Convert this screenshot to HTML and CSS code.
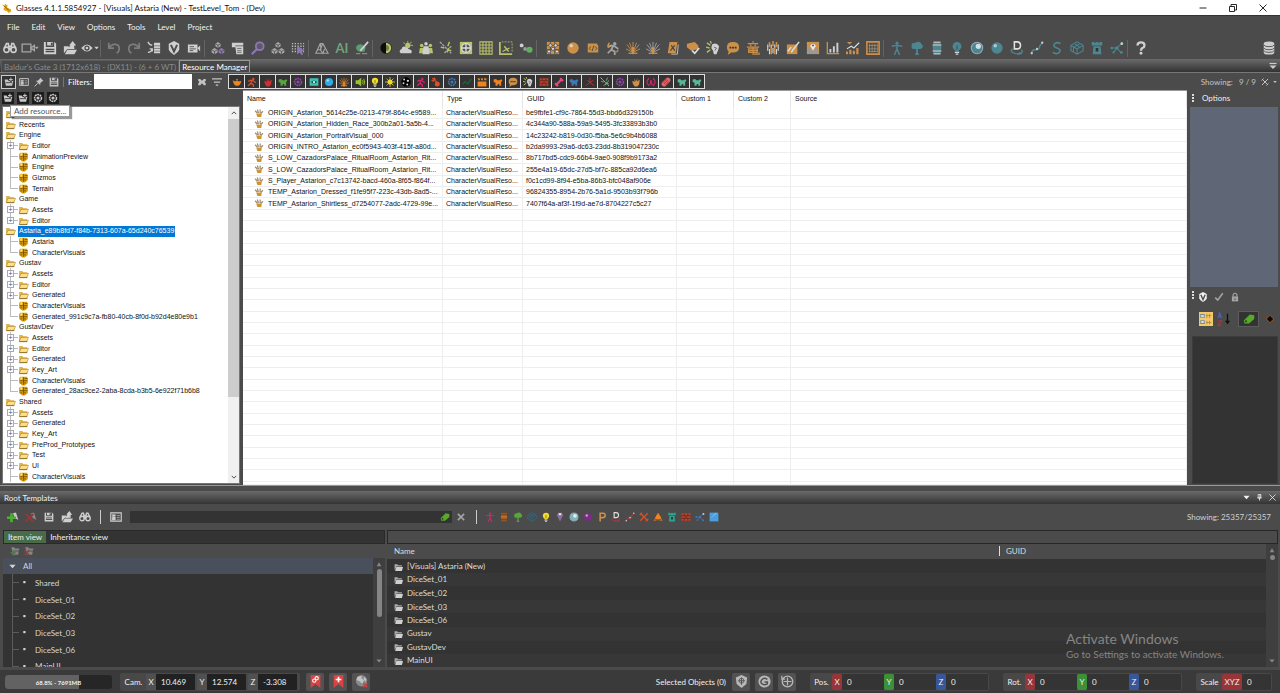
FILE: index.html
```html
<!DOCTYPE html>
<html lang="en">
<head>
  <meta charset="UTF-8">
  <meta name="viewport" content="width=device-width, initial-scale=1.0">
  <title>Glasses 4.1.1.5854927</title>
  <link rel="stylesheet" href="styles.css">
</head>
<body>
  <!-- icon sprite -->
  <svg class="sprite" aria-hidden="true">
    <symbol id="logo" viewBox="0 0 16 16"><path d="M0 2l4 2 1-3 4 3-1 3 6 3 1 3-4 3-3-3-4-1-2-3 2-2z" fill="#e2a712"/><path d="M4 5l7 7" stroke="#7a5200" stroke-width="1.500"/></symbol>
    <symbol id="binoc" viewBox="0 0 16 16"><g fill="none" stroke="currentColor" stroke-width="1.800"><circle cx="4" cy="10" r="3"/><circle cx="12" cy="10" r="3"/><path d="M1.500 8L4 3h2l1 6h2l1-6h2l2.500 5M6 6h4"/></g></symbol>
    <symbol id="camera" viewBox="0 0 20 16"><path d="M1 3.500h10v9H1zM11 8l4-3v6z" fill="none" stroke="currentColor" stroke-width="1.500"/><path d="M15.500 6.500H20l-2.200 3z" fill="currentColor"/></symbol>
    <symbol id="save" viewBox="0 0 16 16"><path d="M1 1h12l2 2v12H1z" fill="currentColor"/><path d="M4 1v5h8V1M3 9.500h10M3 12h10" fill="none" stroke="#4b4b4b" stroke-width="1.500"/><path d="M9 2h2v3H9z" fill="#4b4b4b"/></symbol>
    <symbol id="open" viewBox="0 0 16 16"><path d="M1 14V6h5l1 1h6v2H5zM2 15l3-5h11l-3 5z" fill="currentColor"/><path d="M7 9c0-3 1-4 2-4H7l4-5 4 5h-2c0 3-2 4-6 4z" fill="currentColor"/></symbol>
    <symbol id="eye" viewBox="0 0 20 16"><path d="M0 8q6.500-8 13 0-6.500 8-13 0z" fill="currentColor"/><circle cx="6.500" cy="8" r="3" fill="#4b4b4b"/><circle cx="6.500" cy="8" r="1.500" fill="currentColor"/><path d="M15 6.500h5l-2.500 3z" fill="currentColor"/></symbol>
    <symbol id="undo" viewBox="0 0 16 16"><path d="M2 2v6h6M2.500 7.500C6 2 14 3 14 9q0 3-3 5" fill="none" stroke="currentColor" stroke-width="2"/></symbol>
    <symbol id="redo" viewBox="0 0 16 16"><path d="M14 2v6H8M13.500 7.500C10 2 2 3 2 9q0 3 3 5" fill="none" stroke="currentColor" stroke-width="2"/></symbol>
    <symbol id="flow" viewBox="0 0 16 16"><path d="M1 1l2 3 3 1M1 13q4 0 5-4M3 9h3v3" fill="none" stroke="currentColor" stroke-width="1.600"/><path d="M8 2h7v12H8z" fill="currentColor"/><path d="M8 5.500h7M8 8.500h7M8 11.500h7" stroke="#777"/></symbol>
    <symbol id="vshield" viewBox="0 0 16 16"><path d="M8 0l6 3v7q-1 3-6 6-5-3-6-6V3z" fill="currentColor"/><path d="M4.500 4.500L8 12l3.500-7.500" fill="none" stroke="#4b4b4b" stroke-width="2.200"/></symbol>
    <symbol id="camcorder" viewBox="0 0 16 16"><path d="M1 4h11v9H1zM12 8l3-3v7z" fill="currentColor"/><path d="M3 6.500h5M3 9h7M3 11h4" stroke="#4b4b4b"/></symbol>
    <symbol id="cubes" viewBox="0 0 16 16"><path d="M8 1l3 2v3L8 8 5 6V3zM4 8l3.500 2v3L4 15 .7 13v-3z" fill="currentColor"/><path d="M12 8l3.300 2v3L12 15l-3.300-2v-3z" fill="var(--hi, currentColor)"/><path d="M5 3l3 2 3-2M8 5v3M1 10l3 2 3-2M4 12v3M9 10l3 2 3-2M12 12v3" fill="none" stroke="#444" stroke-width=".8"/></symbol>
    <symbol id="scroll" viewBox="0 0 16 16"><path d="M1 2h13v3H5v2H1zM5 6h9v9H6z" fill="currentColor"/><path d="M7 8.500h5M7 11h5M7 13h5" stroke="#666"/></symbol>
    <symbol id="search" viewBox="0 0 16 16"><circle cx="10" cy="6" r="4.500" fill="#5d5967" stroke="currentColor" stroke-width="2"/><path d="M7 9l-6 6" stroke="currentColor" stroke-width="2.500"/></symbol>
    <symbol id="dots" viewBox="0 0 16 16"><path d="M1 3h14M1 6h14M1 9h14M1 12h14" stroke="#bdbdbd" stroke-width="1.500" stroke-dasharray="1.500 1.700"/><path d="M7 5l8 6-3 1 2 3-2 1-2-3-3 2z" fill="#8d78b5"/></symbol>
    <symbol id="peak" viewBox="0 0 16 16"><path d="M1 14L6 3h3l6 11zM6 3l1 7M9 3L6 10l3 4 2-5M3 10h3" fill="none" stroke="currentColor" stroke-width="1.300"/></symbol>
    <symbol id="brush" viewBox="0 0 16 16"><path d="M1 8q1-5 7-4l4 3-1 5q-8 2-10-4z" fill="#5d9b73"/><path d="M15 1L8 9l-2 2" stroke="#d0d0d0" stroke-width="2" fill="none"/><path d="M1 14.500h5M8 14.500h6" stroke="#888" stroke-width="1.500"/></symbol>
    <symbol id="half" viewBox="0 0 16 16"><circle cx="8" cy="8" r="7.500" fill="#0c0c0c"/><path d="M8 1a7 7 0 010 14z" fill="#b9c26c"/><path d="M8 4a4 4 0 010 8z" fill="#0c0c0c" opacity=".4"/></symbol>
    <symbol id="cloud" viewBox="0 0 16 16"><circle cx="10" cy="5" r="3" fill="#b9c26c"/><path d="M10 0v2M5 2l2 1M14 1l-1 2M13 5h3" stroke="#b9c26c"/><path d="M2 14q-3-3 1-5 1-4 5-2 2 0 3 2 5 1 3 5z" fill="#cfcfcf"/></symbol>
    <symbol id="people" viewBox="0 0 16 16"><circle cx="8" cy="3" r="2" fill="currentColor"/><circle cx="3" cy="5" r="2" fill="var(--hi)"/><circle cx="13" cy="5" r="2" fill="var(--hi)"/><path d="M0 14l1-6h4v6zM11 14V8h4l1 6z" fill="var(--hi)"/><path d="M4 15l1-9h6l1 9z" fill="currentColor"/></symbol>
    <symbol id="wand" viewBox="0 0 16 16"><path d="M1 1l13 13M14 6l-8 8" stroke="currentColor" stroke-width="1.500" stroke-dasharray="3 1"/><path d="M12 1l-2 5M2 7l4 1M9 13l2-5M14 11l-4-1" stroke="var(--hi, #6cae7a)" stroke-width="1.600"/></symbol>
    <symbol id="compass" viewBox="0 0 16 16"><path d="M1 1h14v14H1z" fill="#b9c26c"/><circle cx="8" cy="8" r="5" fill="#555" stroke="#ddd" stroke-width="1.500"/><path d="M8 3v10M3 8h10" stroke="#ddd" stroke-width="1.500"/></symbol>
    <symbol id="grid" viewBox="0 0 16 16"><path d="M1 1h14v14H1zM4.500 1v14M8 1v14M11.500 1v14M1 4.500h14M1 8h14M1 11.500h14" fill="none" stroke="currentColor" stroke-width="1.200"/></symbol>
    <symbol id="ruler" viewBox="0 0 16 16"><path d="M1 1v14h14" fill="none" stroke="currentColor" stroke-width="2"/><path d="M3 1h12v12" fill="none" stroke="currentColor" stroke-dasharray="2 1.500"/><path d="M4 12l8-4M6 6l5 6" stroke="currentColor" stroke-width="1.500"/></symbol>
    <symbol id="atoms" viewBox="0 0 16 16"><circle cx="3" cy="5" r="2.200" fill="#d0d0d0"/><circle cx="7" cy="9" r="2.200" fill="#9a9a9a"/><circle cx="12" cy="10" r="3.500" fill="#5db15d"/></symbol>
    <symbol id="board" viewBox="0 0 16 16"><path d="M1 1h14v14H1z" fill="currentColor"/><path d="M1 5h14M1 10h14M5 1v14M10 1v14" stroke="#4b4b4b"/><g fill="#ddd" stroke="#444" stroke-width=".8"><circle cx="5" cy="5" r="1.800"/><circle cx="11" cy="5" r="1.800"/><circle cx="8" cy="9" r="1.800"/><circle cx="3.500" cy="12" r="1.800"/><circle cx="12.500" cy="12" r="1.800"/></g></symbol>
    <symbol id="ball" viewBox="0 0 16 16"><circle cx="8" cy="8" r="6.500" fill="currentColor"/><circle cx="6" cy="5.500" r="2" fill="#fff" opacity=".55"/></symbol>
    <symbol id="code" viewBox="0 0 16 16"><path d="M1 2h12l2 3v9H1z" fill="currentColor"/><path d="M5 6L3 8.500 5 11M11 6l2 2.500-2 2.500M9 5l-2 7" fill="none" stroke="#4b4b4b" stroke-width="1.300"/></symbol>
    <symbol id="runner" viewBox="0 0 16 16"><circle cx="10" cy="3" r="2" fill="currentColor"/><path d="M2 7l4-2 4 1 4 3M8 6l-2 4 4 2v4M6 10l-4 4" fill="none" stroke="currentColor" stroke-width="2"/><path d="M4 2q-3 3-1 6M12 13l2-3" fill="none" stroke="var(--hi, none)" stroke-width="1.500"/></symbol>
    <symbol id="burst" viewBox="0 0 16 16"><path d="M8 1v13M1 4l7 9 7-9M0 9l8 4 8-4M4 2l4 11 4-11" fill="none" stroke="currentColor"/><path d="M3 14h10" stroke="var(--hi, currentColor)" stroke-width="1.500"/><path d="M8 7v8" stroke="var(--hi, currentColor)" stroke-width="2.500"/></symbol>
    <symbol id="card" viewBox="0 0 16 16"><path d="M4 1h9l-2 13H2z" fill="currentColor"/><path d="M14 4l-1 11H6" fill="none" stroke="#ccc"/><path d="M6 5l4 6M10 5l-5 6" stroke="#444" stroke-width="1.300"/></symbol>
    <symbol id="tagcheck" viewBox="0 0 16 16"><path d="M1 3l9-2 4 4v4l-8 2-5-4z" fill="currentColor"/><path d="M7 11l3 3 5-6" fill="none" stroke="#ddd" stroke-width="2"/></symbol>
    <symbol id="shout" viewBox="0 0 16 16"><path d="M7 4q5-3 8 2l-1 4-2 5H9l-1-4-2-3z" fill="#d0d0d0"/><path d="M1 2l4 3M0 7l4 1M1 13l4-3M5 0l1 3" stroke="#b9c26c" stroke-width="1.500"/><path d="M9 7l3 1-2 3" fill="none" stroke="#666"/></symbol>
    <symbol id="chat" viewBox="0 0 16 16"><path d="M1 7q0-6 7-6t7 6-7 6H6l-4 3 1-4q-2-2-2-5z" fill="currentColor"/><path d="M4 6.500h2v2H4zM7 6.500h2v2H7zM10 6.500h2v2h-2z" fill="#333"/></symbol>
    <symbol id="ideogram" viewBox="0 0 16 16"><path d="M8 0v2M2 3h12M5 4l1 2M11 4l-1 2M1 7h14M3 9h10v4H3zM3 11h10M8 7v8h7v-2" fill="none" stroke="currentColor" stroke-width="1.300"/></symbol>
    <symbol id="crowd" viewBox="0 0 16 16"><path d="M4 1v6M8 0v6M12 1v6M6 8v7M10 8v7" stroke="#cc9049" stroke-width="1.800"/><path d="M2 4v7M6 4v4M10 4v4M14 4v7M4 9v6M8 8v6M12 9v6" stroke="#d5d5d5" stroke-width="1.300"/></symbol>
    <symbol id="paint" viewBox="0 0 16 16"><path d="M1 4h12v11H1z" fill="currentColor"/><path d="M15 1L8 10l-2 3M2 12l4-5" stroke="#ddd" stroke-width="1.700" fill="none"/></symbol>
    <symbol id="map" viewBox="0 0 16 16"><path d="M1 1h14v14H1z" fill="currentColor"/><path d="M2 8l5 2 7-2v6H2z" fill="#999"/><path d="M8 11L5 6a3 3 0 116 0z" fill="#e8e8e8"/><circle cx="8" cy="5" r="1" fill="#444"/></symbol>
    <symbol id="bars" viewBox="0 0 16 16"><path d="M1.500 1v13.500H15" fill="none" stroke="#cc9049" stroke-width="1.500"/><path d="M5 9v4M9 6v7M13 2v11" stroke="#cfcfcf" stroke-width="2.200"/></symbol>
    <symbol id="trend" viewBox="0 0 16 16"><path d="M1 12v3M5 10v5M9 11v4M13 8v7" stroke="#cc9049" stroke-width="2.500"/><path d="M1 9l5-3 3 2 6-6" fill="none" stroke="#ddd" stroke-width="1.300"/><path d="M1 1h6L4 4z" fill="#cc9049"/></symbol>
    <symbol id="abacus" viewBox="0 0 16 16"><path d="M1 1h14v14H1z" fill="#55493a" stroke="currentColor" stroke-width="1.800"/><path d="M4 3v10M7 3v10M10 3v10M13 3v10M3 5h10M3 9h10M3 12h10" stroke="#999" stroke-width=".8"/></symbol>
    <symbol id="person" viewBox="0 0 16 16"><circle cx="8" cy="2.500" r="1.800" fill="currentColor"/><path d="M2 6l6-1 6 1M8 4v5l-3 7M8 9l3 7" fill="none" stroke="currentColor" stroke-width="1.700"/></symbol>
    <symbol id="tree" viewBox="0 0 16 16"><path d="M2 6q-1-4 4-4 5-3 7 1 4 4-1 6H4Q1 9 2 6z" fill="currentColor"/><path d="M8 7v8M6 15h4" stroke="currentColor" stroke-width="2"/></symbol>
    <symbol id="barrel" viewBox="0 0 16 16"><path d="M4 1h8l1 6-1 8H4L3 7z" fill="currentColor"/><path d="M3 4.500h10M3 11.500h10M4 1.500h8M4 14.500h8" stroke="var(--hi, #6b3c18)" stroke-width="1.600"/></symbol>
    <symbol id="bulb" viewBox="0 0 16 16"><circle cx="8" cy="6" r="5" fill="currentColor"/><path d="M6 9h4v3H6z" fill="currentColor"/><path d="M5.500 13h5M6.500 15h3" stroke="#d5d5d5" stroke-width="1.500"/><path d="M8 5v5" stroke="#444"/></symbol>
    <symbol id="sphere" viewBox="0 0 16 16"><circle cx="8" cy="8" r="6.500" fill="currentColor" stroke="#9ab" stroke-width="1.200"/><circle cx="9.500" cy="6" r="3" fill="#fff" opacity=".75"/></symbol>
    <symbol id="decal" viewBox="0 0 16 16"><path d="M5 1h3q4 0 4 4t-4 4H5z" fill="none" stroke="#e0e0e0" stroke-width="1.800"/><path d="M3 9q-4 3 2 5t8 0 0-4M9 15l3-2" fill="none" stroke="currentColor" stroke-width="1.500"/></symbol>
    <symbol id="spline" viewBox="0 0 16 16"><path d="M2 14q0-4 4-4 5 1 5-4l3-4" fill="none" stroke="currentColor" stroke-width="1.600"/><circle cx="14" cy="2" r="1.300" fill="#ccc"/><circle cx="8" cy="9" r="1.300" fill="#ccc"/><circle cx="2" cy="14" r="1.300" fill="#ccc"/></symbol>
    <symbol id="scurve" viewBox="0 0 16 16"><path d="M12 3Q9 1 6 2.500 2 6 8 8q6 2 2 5.500-3 2-7-.5" fill="none" stroke="currentColor" stroke-width="1.800"/></symbol>
    <symbol id="cube" viewBox="0 0 16 16"><path d="M1 5l7-4 7 4v6l-7 4-7-4zM1 5l7 4 7-4M8 9v6M4 7v5M5 3l6 4M11 3L5 7" fill="none" stroke="currentColor" stroke-width="1.200"/></symbol>
    <symbol id="tower" viewBox="0 0 16 16"><path d="M2 1h3v1h2V1h2v1h2V1h3v4H2zM4 6h8l1 9H3z" fill="currentColor"/><path d="M6.500 8h3v4h-3z" fill="#333"/></symbol>
    <symbol id="nodes" viewBox="0 0 16 16"><path d="M2 8h6l6-6M8 8l5 6M8 8l-4 5" fill="none" stroke="currentColor" stroke-width="1.200"/><g fill="currentColor"><circle cx="2" cy="8" r="1.500"/><circle cx="8" cy="8" r="2"/><circle cx="13" cy="13" r="1.600"/><circle cx="4" cy="13" r="1.300"/></g><circle cx="13.500" cy="3" r="1.600" fill="#ccc"/></symbol>
    <symbol id="help" viewBox="0 0 16 16"><path d="M4 5q0-3.500 4-3.500T12 5q0 2-2.500 3Q8 9 8 11" fill="none" stroke="currentColor" stroke-width="2.600"/><circle cx="8" cy="14" r="1.700" fill="currentColor"/></symbol>
    <symbol id="db" viewBox="0 0 16 16"><path d="M2 3v10q0 2.500 6 2.500t6-2.500V3" fill="currentColor"/><ellipse cx="8" cy="3" rx="6" ry="2.500" fill="currentColor"/><path d="M2 4.500q1 2 6 2t6-2M2 8q1 2 6 2t6-2M2 11q1 2 6 2t6-2" fill="none" stroke="#4b4b4b"/></symbol>
    <symbol id="addres" viewBox="0 0 16 16"><path d="M1 4h5l1 2h8l-2 8H3z" fill="currentColor"/><path d="M3 9h10" stroke="#333" stroke-width="1.300"/><path d="M11 1v7M8 4h7" stroke="#333" stroke-width="3"/><path d="M11 1v6M8 4h6" stroke="currentColor" stroke-width="1.500"/></symbol>
    <symbol id="addfolder" viewBox="0 0 16 16"><path d="M2 2h5l1 2h7l-2 10H5z" fill="currentColor"/><path d="M6 8h9" stroke="#4b4b4b" stroke-width="1.300"/><path d="M5 7v8M1 11h8" stroke="#4c7b48" stroke-width="2.500"/></symbol>
    <symbol id="delfolder" viewBox="0 0 16 16"><path d="M2 2h5l1 2h7l-2 10H5z" fill="currentColor"/><path d="M6 8h9" stroke="#4b4b4b" stroke-width="1.300"/><path d="M1 7l7 7M8 7l-7 7" stroke="#8e4044" stroke-width="2.500"/></symbol>
    <symbol id="panel" viewBox="0 0 16 16"><path d="M1 2.500h14v11H1z" fill="none" stroke="currentColor" stroke-width="1.500"/><path d="M3 5h4v2H3zM3 8h4v4H3zM9 6h4M9 8.500h4M9 11h4" fill="currentColor" stroke="currentColor" stroke-width=".8"/></symbol>
    <symbol id="pin" viewBox="0 0 16 16"><path d="M10 1l5 5-2 1-3 3v3L3 6h3l3-3z" fill="currentColor"/><path d="M6 10l-5 5" stroke="currentColor" stroke-width="1.600"/></symbol>
    <symbol id="cross" viewBox="0 0 16 16"><path d="M3 3l10 10M13 3L3 13" stroke="currentColor" stroke-width="2.600"/></symbol>
    <symbol id="clear" viewBox="0 0 16 16"><path d="M2 3h3l3 3 3-3h3v3l-2 2 2 2v3h-3l-3-3-3 3H2v-3l2-2-2-2z" fill="currentColor"/></symbol>
    <symbol id="filter" viewBox="0 0 16 16"><path d="M0 3h16M3 8h10M6 13h4" stroke="currentColor" stroke-width="2"/></symbol>
    <symbol id="teapot" viewBox="0 0 16 16"><path d="M1 5l4 2q3-3 6 0l4-1-2 6-3 2H6l-3-3z" fill="currentColor"/><circle cx="8" cy="4" r="1.300" fill="currentColor"/></symbol>
    <symbol id="gear" viewBox="0 0 16 16"><circle cx="8" cy="8" r="5.500" fill="none" stroke="currentColor" stroke-width="2.500" stroke-dasharray="3 1"/><circle cx="8" cy="8" r="2.500" fill="currentColor"/></symbol>
    <symbol id="hand" viewBox="0 0 16 16"><path d="M2 6l4 2-1-6 3 5 2-6v6l4-3-1 8-3 3H6L3 11z" fill="currentColor"/></symbol>
    <symbol id="reel" viewBox="0 0 16 16"><path d="M1 2h14v12H1z" fill="currentColor"/><path d="M3 8q5-5 10 0-5 5-10 0z" fill="#164d49"/><circle cx="8" cy="8" r="1.800" fill="#c9fff8"/></symbol>
    <symbol id="speaker" viewBox="0 0 16 16"><path d="M1 5h4l5-4v14l-5-4H1z" fill="currentColor"/><path d="M12 5q2 3 0 6M14 3q3 5 0 10" stroke="currentColor" stroke-width="1.500" fill="none"/></symbol>
    <symbol id="sun" viewBox="0 0 16 16"><circle cx="8" cy="8" r="4" fill="currentColor"/><path d="M8 0v16M0 8h16M2.500 2.500l11 11M13.500 2.500l-11 11" stroke="currentColor" stroke-width="1.200"/></symbol>
    <symbol id="moon" viewBox="0 0 16 16"><circle cx="8" cy="8" r="7.500" fill="#000"/><g fill="#ddd"><circle cx="5" cy="4" r="1.500"/><circle cx="11" cy="6" r="1.800"/><circle cx="4" cy="10" r="1.500"/><circle cx="10" cy="12" r="1.500"/></g></symbol>
    <symbol id="spray" viewBox="0 0 16 16"><circle cx="10" cy="11" r="4" fill="currentColor"/><path d="M2 2l3 2 4 4M1 5l4 2M5 1l2 4" stroke="currentColor" stroke-width="2"/></symbol>
    <symbol id="path" viewBox="0 0 16 16"><path d="M1 12l4-5 4 4 6-8" fill="none" stroke="currentColor" stroke-width="1.800"/></symbol>
    <symbol id="clap" viewBox="0 0 16 16"><path d="M1 7h14v8H1zM1 2h3l1 3H2zM6 2h3l1 3H7zM11 2h4v3h-3z" fill="currentColor"/></symbol>
    <symbol id="brick" viewBox="0 0 16 16"><path d="M1 2h14v12H1z" fill="currentColor"/><path d="M1 6h14M1 10h14M5 2v4M11 2v4M8 6v4M5 10v4M11 10v4" stroke="#402020"/></symbol>
    <symbol id="bone" viewBox="0 0 16 16"><path d="M4 12l8-8" stroke="currentColor" stroke-width="3.500"/><g fill="currentColor"><circle cx="3" cy="11" r="2"/><circle cx="5" cy="13" r="2"/><circle cx="11" cy="3" r="2"/><circle cx="13" cy="5" r="2"/></g></symbol>
    <symbol id="axis" viewBox="0 0 16 16"><path d="M8 1v8L1 14M8 9l7 5M3 5l5 4 5-4" fill="none" stroke="currentColor" stroke-width="1.300"/></symbol>
    <symbol id="broadcast" viewBox="0 0 16 16"><path d="M5 2q-7 6 0 12M11 2q7 6 0 12M6 13l2-8 2 8" fill="none" stroke="currentColor" stroke-width="1.800"/></symbol>
    <symbol id="pill" viewBox="0 0 16 16"><path d="M5 11l6-6" stroke="currentColor" stroke-width="8" stroke-linecap="round"/><path d="M3 9l6-6M7 13l6-6M5 11l6-6" stroke="#7d2226"/></symbol>
    <symbol id="beast" viewBox="0 0 16 16"><path d="M1 4l4-1 2 2h4l2-2 2 3-2 2v6h-3v-3H8l-1 3H4V9L1 8z" fill="currentColor"/></symbol>
    <symbol id="tools" viewBox="0 0 16 16"><path d="M2 2l12 12M14 2L2 14M1 5l4-4M11 15l4-4" stroke="currentColor" stroke-width="2"/></symbol>
    <symbol id="folder" viewBox="0 0 16 16"><path d="M1 3h5l2 2h6v9H1z" fill="#dfb54c"/><path d="M1 14L4 7h12l-3 7z" fill="#ffe089" stroke="#9b741a" stroke-width=".8"/><path d="M2 13.500h12" stroke="#68501c"/></symbol>
    <symbol id="pack" viewBox="0 0 16 16"><path d="M3 1h10l2 2v8l-5 4H6l-5-4V3z" fill="#d99e08"/><path d="M8 2v12M2 7.500h12M10 4h4M3 11h3M9 11h3" stroke="#684700" stroke-width="1.200"/><path d="M3 2h3v4H3z" fill="#ffe56c"/></symbol>
    <symbol id="paw" viewBox="0 0 16 16"><path d="M3 8h10l-1 6H5z" fill="#cf9330"/><path d="M1 3l4 4M5 1l2 6M10 1v6M15 4l-4 4" stroke="#a08d72" stroke-width="2.200"/></symbol>
    <symbol id="dfolder" viewBox="0 0 16 16"><path d="M1 2h5l1 2h7v2H4l-2 6H1z" fill="#aaa"/><path d="M4 7h12l-2 7H2z" fill="#cfcfcf"/></symbol>
    <symbol id="check" viewBox="0 0 16 16"><path d="M2 9l4 4 8-11" fill="none" stroke="currentColor" stroke-width="2.500"/></symbol>
    <symbol id="lock" viewBox="0 0 16 16"><path d="M3 7h10v8H3z" fill="currentColor"/><path d="M5 7V4q3-4 6 0v3" fill="none" stroke="currentColor" stroke-width="1.800"/><path d="M8 10v3" stroke="#444" stroke-width="1.500"/></symbol>
    <symbol id="props" viewBox="0 0 16 16"><path d="M0 0h16v16H0z" fill="#f4c968"/><path d="M2 3h4v3H2zM2 10h4v3H2z" fill="#fff" stroke="#7088a0" stroke-width="1.200"/><path d="M9 2v5M12 2v5M9 10v4M12 10v4M8 4h6M8 12h6" stroke="#b48c35"/></symbol>
    <symbol id="sort" viewBox="0 0 16 16"><path d="M1 7l2-6 2 6M2 5h3" fill="none" stroke="#4a68b0" stroke-width="1.300"/><path d="M1 10h4l-4 5h4" fill="none" stroke="#a23b3b" stroke-width="1.300"/><path d="M12 2v9" stroke="#111" stroke-width="1.500"/><path d="M9 10h6l-3 4z" fill="#111"/></symbol>
    <symbol id="tag" viewBox="0 0 16 16"><path d="M9 2l6 1v5l-7 6H2l-1-4z" fill="#57a82b"/><circle cx="4" cy="11" r="1.400" fill="#26470f"/></symbol>
    <symbol id="diamond" viewBox="0 0 16 16"><path d="M8 2l6 6-6 6-6-6z" fill="#0b0b0b" stroke="#a8551a" stroke-width="1.600"/></symbol>
    <symbol id="plus" viewBox="0 0 16 16"><path d="M8 3l4-1 3 10-5-3z" fill="#c8c8c8"/><path d="M6 3v12M0 9h12" stroke="#4caf2f" stroke-width="3.500"/></symbol>
    <symbol id="minus" viewBox="0 0 16 16"><path d="M8 3l4-1 3 10-5-3z" fill="#888"/><path d="M1 4l10 10M11 4L1 14" stroke="#963638" stroke-width="3"/></symbol>
    <symbol id="park" viewBox="0 0 16 16"><path d="M5 15V2h5q3 0 3 3.500T9 9H5" fill="none" stroke="currentColor" stroke-width="2.500"/></symbol>
    <symbol id="gem" viewBox="0 0 16 16"><path d="M5 1h6l2 4-5 10L3 5z" fill="#8c6a99"/><path d="M6 2h4v3H6z" fill="#eee"/></symbol>
    <symbol id="fire" viewBox="0 0 16 16"><path d="M8 1l4 6 3 7H1l3-6z" fill="currentColor"/><path d="M2 15l12-4M14 15L2 11" stroke="#4b4b4b" stroke-width="1.300"/></symbol>
    <symbol id="square" viewBox="0 0 16 16"><path d="M1 1h14v14H1z" fill="#4b9fe0"/><path d="M2 10L10 2h3z" fill="#7fc4f5"/></symbol>
    <symbol id="mark" viewBox="0 0 16 16"><path d="M2 0h12v16l-6-5-6 5z" fill="#db4343"/><g fill="none" stroke="#fff" stroke-width="1.300"><circle cx="6.500" cy="7" r="2"/><circle cx="9.500" cy="4" r="2"/></g></symbol>
    <symbol id="markplus" viewBox="0 0 16 16"><path d="M2 0h12v16l-6-5-6 5z" fill="#db4343"/><path d="M8 2v7M4.500 5.500h7" stroke="#fff" stroke-width="2"/></symbol>
    <symbol id="globe" viewBox="0 0 16 16"><circle cx="8" cy="7" r="7" fill="#8a8a8a"/><path d="M3 2l5-1v3l3 2-2 5-3-3-4-2zM11 2l3 3-1 3-2-2z" fill="#c2c2c2"/><path d="M10 10l5 5M15 10l-5 5" stroke="#c84444" stroke-width="2"/></symbol>
    <symbol id="gshield" viewBox="0 0 16 16"><path d="M8 0l7 3-1 8-6 5-6-5-1-8z" fill="currentColor"/><path d="M8 3v9M4 7h8" stroke="#555" stroke-width="1.300"/><circle cx="8" cy="7" r="3" fill="none" stroke="#555"/></symbol>
    <symbol id="gring" viewBox="0 0 16 16"><circle cx="8" cy="8" r="7.500" fill="currentColor"/><path d="M11.500 5.500Q8 2.500 5 5.500t0 5.500q3 2 6.500 0V8.500H8" fill="none" stroke="#505050" stroke-width="1.800"/></symbol>
    <symbol id="target" viewBox="0 0 16 16"><circle cx="8" cy="8" r="6.500" fill="none" stroke="currentColor" stroke-width="1.600"/><path d="M8 3v10M3 8h10M1 1v4h4" fill="none" stroke="currentColor" stroke-width="1.500"/></symbol>
    <symbol id="up" viewBox="0 0 16 16"><path d="M2 14L8 3l6 11z" fill="currentColor"/></symbol>
    <symbol id="down" viewBox="0 0 16 16"><path d="M1 4h14l-7 8z" fill="currentColor"/></symbol>
    <symbol id="chevup" viewBox="0 0 16 16"><path d="M2 11l6-6 6 6" fill="none" stroke="currentColor" stroke-width="2.500"/></symbol>
    <symbol id="chevdown" viewBox="0 0 16 16"><path d="M2 5l6 6 6-6" fill="none" stroke="currentColor" stroke-width="2.500"/></symbol>
    <symbol id="win-min" viewBox="0 0 16 16"><path d="M1 8h14" stroke="currentColor" stroke-width="1.800"/></symbol>
    <symbol id="win-max" viewBox="0 0 16 16"><path d="M1 5h10v10H1zM4 5V1h11v11h-4" fill="none" stroke="currentColor" stroke-width="1.800"/></symbol>
    <symbol id="win-close" viewBox="0 0 16 16"><path d="M1 1l14 14M15 1L1 15" stroke="currentColor" stroke-width="1.800"/></symbol>
    <symbol id="dockpin" viewBox="0 0 16 16"><path d="M5 1h6v8H5zM3 9h10M8 9v6M9 1v8" fill="none" stroke="currentColor" stroke-width="1.800"/></symbol>
    <symbol id="overflow" viewBox="0 0 16 16"><path d="M1 3h14" stroke="currentColor" stroke-width="2.500"/><path d="M1 7h14l-7 7z" fill="currentColor"/></symbol>
  </svg>

  <header class="titlebar">
    <svg class="ic"><use href="#logo"/></svg>
    <h1>Glasses 4.1.1.5854927 - [Visuals] Astaria (New) - TestLevel_Tom - (Dev)</h1>
    <div class="window-buttons">
      <button aria-label="Minimize"><svg><use href="#win-min"/></svg></button>
      <button aria-label="Restore"><svg><use href="#win-max"/></svg></button>
      <button aria-label="Close"><svg><use href="#win-close"/></svg></button>
    </div>
  </header>

  <nav class="menubar">
    <button>File</button><button>Edit</button><button>View</button><button>Options</button><button>Tools</button><button>Level</button><button>Project</button>
  </nav>

  <div class="toolbar main-toolbar">
    <button aria-label="Find"><svg class="ic"><use href="#binoc"/></svg></button>
    <button aria-label="Camera" class="dim"><svg class="ic-wide"><use href="#camera"/></svg></button>
    <button aria-label="Save"><svg class="ic"><use href="#save"/></svg></button>
    <button aria-label="Open"><svg class="ic"><use href="#open"/></svg></button>
    <button aria-label="Visibility"><svg class="ic-wide"><use href="#eye"/></svg></button>
    <span class="sep"></span>
    <button aria-label="Undo" class="off"><svg class="ic"><use href="#undo"/></svg></button>
    <button aria-label="Redo" class="off"><svg class="ic"><use href="#redo"/></svg></button>
    <button aria-label="Hierarchy"><svg class="ic"><use href="#flow"/></svg></button>
    <button aria-label="Validate"><svg class="ic"><use href="#vshield"/></svg></button>
    <button aria-label="Recorder"><svg class="ic"><use href="#camcorder"/></svg></button>
    <span class="sep"></span>
    <button aria-label="Templates" class="dim hi-purple"><svg class="ic"><use href="#cubes"/></svg></button>
    <button aria-label="Journal"><svg class="ic"><use href="#scroll"/></svg></button>
    <button aria-label="Search" class="purple"><svg class="ic"><use href="#search"/></svg></button>
    <button aria-label="Objects" class="dim"><svg class="ic"><use href="#cubes"/></svg></button>
    <button aria-label="Select"><svg class="ic"><use href="#dots"/></svg></button>
    <span class="sep"></span>
    <button aria-label="Terrain" class="dim"><svg class="ic"><use href="#peak"/></svg></button>
    <button class="ai">AI</button>
    <button aria-label="Paint terrain"><svg class="ic"><use href="#brush"/></svg></button>
    <span class="sep"></span>
    <button aria-label="Lighting"><svg class="ic-m"><use href="#half"/></svg></button>
    <button aria-label="Atmosphere"><svg class="ic"><use href="#cloud"/></svg></button>
    <button aria-label="Crowds" class="hi-olive"><svg class="ic"><use href="#people"/></svg></button>
    <button aria-label="Effects" class="dim hi-olive"><svg class="ic"><use href="#wand"/></svg></button>
    <button aria-label="Pivot"><svg class="ic"><use href="#compass"/></svg></button>
    <button aria-label="Grid" class="olive"><svg class="ic"><use href="#grid"/></svg></button>
    <button aria-label="Measure" class="olive"><svg class="ic"><use href="#ruler"/></svg></button>
    <button aria-label="Physics"><svg class="ic"><use href="#atoms"/></svg></button>
    <span class="sep wide"></span>
    <button aria-label="Tiles" class="tan"><svg class="ic"><use href="#board"/></svg></button>
    <button aria-label="Material" class="tan"><svg class="ic"><use href="#ball"/></svg></button>
    <button aria-label="Script" class="tan"><svg class="ic-m"><use href="#code"/></svg></button>
    <button aria-label="Animation" class="dim hi-tan"><svg class="ic"><use href="#runner"/></svg></button>
    <button aria-label="Effect editor" class="tan"><svg class="ic"><use href="#burst"/></svg></button>
    <button aria-label="Effect blend" class="dim hi-tan"><svg class="ic"><use href="#burst"/></svg></button>
    <button aria-label="Cards" class="tan"><svg class="ic"><use href="#card"/></svg></button>
    <button aria-label="Tags" class="tan"><svg class="ic"><use href="#tagcheck"/></svg></button>
    <button aria-label="Voice"><svg class="ic"><use href="#shout"/></svg></button>
    <button aria-label="Dialog" class="tan"><svg class="ic"><use href="#chat"/></svg></button>
    <button aria-label="Localization" class="tan"><svg class="ic"><use href="#ideogram"/></svg></button>
    <button aria-label="Characters"><svg class="ic"><use href="#crowd"/></svg></button>
    <button aria-label="Texture" class="tan"><svg class="ic"><use href="#paint"/></svg></button>
    <button aria-label="Map" class="tan"><svg class="ic"><use href="#map"/></svg></button>
    <button aria-label="Stats"><svg class="ic"><use href="#bars"/></svg></button>
    <button aria-label="Curves"><svg class="ic"><use href="#trend"/></svg></button>
    <button aria-label="Tables" class="tan"><svg class="ic"><use href="#abacus"/></svg></button>
    <span class="sep"></span>
    <button aria-label="Character" class="teal"><svg class="ic"><use href="#person"/></svg></button>
    <button aria-label="Scenery" class="teal"><svg class="ic"><use href="#tree"/></svg></button>
    <button aria-label="Item" class="teal hi-light"><svg class="ic"><use href="#barrel"/></svg></button>
    <button aria-label="Light" class="teal"><svg class="ic"><use href="#bulb"/></svg></button>
    <button aria-label="Probe" class="teal"><svg class="ic"><use href="#sphere"/></svg></button>
    <button aria-label="Fog" class="teal"><svg class="ic"><use href="#ball"/></svg></button>
    <button aria-label="Decal" class="teal"><svg class="ic"><use href="#decal"/></svg></button>
    <button aria-label="Spline" class="teal"><svg class="ic"><use href="#spline"/></svg></button>
    <button aria-label="Surface" class="teal"><svg class="ic"><use href="#scurve"/></svg></button>
    <button aria-label="Volume" class="teal"><svg class="ic"><use href="#cube"/></svg></button>
    <button aria-label="Prefab" class="teal"><svg class="ic"><use href="#tower"/></svg></button>
    <button aria-label="Constellation" class="teal"><svg class="ic"><use href="#nodes"/></svg></button>
    <span class="sep"></span>
    <button aria-label="Help"><svg class="ic"><use href="#help"/></svg></button>
    <button aria-label="Database" class="push"><svg class="ic"><use href="#db"/></svg></button>
  </div>

  <div class="tabstrip">
    <button>Baldur's Gate 3 (1712x618) - (DX11) - (6 + 6 WT)</button>
    <button class="active">Resource Manager</button>
    <button class="push" aria-label="More tabs"><svg class="ic-xs"><use href="#overflow"/></svg></button>
  </div>

  <div class="toolbar resource-toolbar">
    <button aria-label="Resource tree" class="framed"><svg class="ic-s"><use href="#addres"/></svg></button>
    <button aria-label="Details"><svg class="ic-s"><use href="#panel"/></svg></button>
    <button aria-label="Pin"><svg class="ic-s"><use href="#pin"/></svg></button>
    <button aria-label="Save resources"><svg class="ic-s"><use href="#save"/></svg></button>
    <label for="filters">Filters:</label>
    <input id="filters" type="text">
    <button aria-label="Clear filter"><svg class="ic-s"><use href="#clear"/></svg></button>
    <button aria-label="Filter options"><svg class="ic-s"><use href="#filter"/></svg></button>
    <div class="type-filters">
      <button aria-label="Visual" class="c-orange"><svg><use href="#teapot"/></svg></button>
      <button aria-label="Animation" class="c-rust"><svg><use href="#runner"/></svg></button>
      <button aria-label="Blueprint" class="c-red"><svg><use href="#hand"/></svg></button>
      <button aria-label="Atmosphere" class="c-green"><svg><use href="#beast"/></svg></button>
      <button aria-label="Physics" class="c-violet"><svg><use href="#gear"/></svg></button>
      <button aria-label="Texture" class="c-aqua"><svg><use href="#reel"/></svg></button>
      <button aria-label="Material" class="c-sky"><svg><use href="#ball"/></svg></button>
      <button aria-label="Effect" class="c-orange"><svg><use href="#burst"/></svg></button>
      <button aria-label="Sound" class="c-lime"><svg><use href="#speaker"/></svg></button>
      <button aria-label="Light" class="c-yellow"><svg><use href="#bulb"/></svg></button>
      <button aria-label="Lighting" class="c-yellow"><svg><use href="#sun"/></svg></button>
      <button aria-label="Colour list"><svg><use href="#moon"/></svg></button>
      <button aria-label="Skeleton" class="c-pink"><svg><use href="#runner"/></svg></button>
      <button aria-label="Particle" class="c-rust"><svg><use href="#spray"/></svg></button>
      <button aria-label="World" class="c-blue"><svg><use href="#gear"/></svg></button>
      <button aria-label="Path" class="c-dkgreen"><svg><use href="#path"/></svg></button>
      <button aria-label="Timeline" class="c-orange"><svg><use href="#clap"/></svg></button>
      <button aria-label="Scene" class="c-orange"><svg><use href="#beast"/></svg></button>
      <button aria-label="Dialog" class="tan"><svg><use href="#chat"/></svg></button>
      <button aria-label="Voice bark"><svg><use href="#shout"/></svg></button>
      <button aria-label="Tile set" class="c-brick"><svg><use href="#brick"/></svg></button>
      <button aria-label="Bone" class="c-hot"><svg><use href="#bone"/></svg></button>
      <button aria-label="Head" class="c-blue"><svg><use href="#beast"/></svg></button>
      <button aria-label="Axis" class="c-red"><svg><use href="#axis"/></svg></button>
      <button aria-label="Grass" class="c-light"><svg><use href="#wand"/></svg></button>
      <button aria-label="Diffusion" class="c-violet"><svg><use href="#gear"/></svg></button>
      <button aria-label="Character visual" class="tan"><svg><use href="#hand"/></svg></button>
      <button aria-label="Script" class="c-pink"><svg><use href="#broadcast"/></svg></button>
      <button aria-label="Link" class="c-pill"><svg><use href="#pill"/></svg></button>
      <button aria-label="Creature" class="c-mint"><svg><use href="#beast"/></svg></button>
      <button aria-label="Creature set" class="c-mint"><svg><use href="#beast"/></svg></button>
    </div>
    <span class="showing">Showing:&nbsp;&nbsp; 9 / 9</span>
    <button class="settings" aria-label="Settings"><svg class="ic-xs"><use href="#tools"/></svg><svg class="caret"><use href="#down"/></svg></button>
  </div>

  <main class="workspace">
    <section class="browser">
      <div class="browser-tools">
        <button aria-label="Add resource"><svg class="ic-s"><use href="#addres"/></svg></button>
        <button aria-label="Import"><svg class="ic-s"><use href="#addres"/></svg></button>
        <button aria-label="Reload"><svg class="ic-s"><use href="#gear"/></svg></button>
        <button aria-label="Rebuild"><svg class="ic-s"><use href="#gear"/></svg></button>
        <div class="tooltip" role="tooltip">Add resource...</div>
      </div>
      <div class="tree-box">
        <ul class="tree">
          <li><svg><use href="#folder"/></svg></li>
          <li><svg><use href="#folder"/></svg>Recents</li>
          <li><svg><use href="#folder"/></svg>Engine</li>
          <li class="sub more"><svg><use href="#folder"/></svg>Editor</li>
          <li class="sub"><svg><use href="#pack"/></svg>AnimationPreview</li>
          <li class="sub"><svg><use href="#pack"/></svg>Engine</li>
          <li class="sub"><svg><use href="#pack"/></svg>Gizmos</li>
          <li class="sub last"><svg><use href="#pack"/></svg>Terrain</li>
          <li><svg><use href="#folder"/></svg>Game</li>
          <li class="sub more"><svg><use href="#folder"/></svg>Assets</li>
          <li class="sub more last"><svg><use href="#folder"/></svg>Editor</li>
          <li class="selected"><svg><use href="#folder"/></svg><span>Astaria_e89b8fd7-f84b-7313-607a-65d240c76539</span></li>
          <li class="sub"><svg><use href="#pack"/></svg>Astaria</li>
          <li class="sub last"><svg><use href="#pack"/></svg>CharacterVisuals</li>
          <li><svg><use href="#folder"/></svg>Gustav</li>
          <li class="sub more"><svg><use href="#folder"/></svg>Assets</li>
          <li class="sub more"><svg><use href="#folder"/></svg>Editor</li>
          <li class="sub more"><svg><use href="#folder"/></svg>Generated</li>
          <li class="sub"><svg><use href="#pack"/></svg>CharacterVisuals</li>
          <li class="sub last"><svg><use href="#pack"/></svg>Generated_991c9c7a-fb80-40cb-8f0d-b92d4e80e9b1</li>
          <li><svg><use href="#folder"/></svg>GustavDev</li>
          <li class="sub more"><svg><use href="#folder"/></svg>Assets</li>
          <li class="sub more"><svg><use href="#folder"/></svg>Editor</li>
          <li class="sub more"><svg><use href="#folder"/></svg>Generated</li>
          <li class="sub more"><svg><use href="#folder"/></svg>Key_Art</li>
          <li class="sub"><svg><use href="#pack"/></svg>CharacterVisuals</li>
          <li class="sub last"><svg><use href="#pack"/></svg>Generated_28ac9ce2-2aba-8cda-b3b5-6e922f71b6b8</li>
          <li><svg><use href="#folder"/></svg>Shared</li>
          <li class="sub more"><svg><use href="#folder"/></svg>Assets</li>
          <li class="sub more"><svg><use href="#folder"/></svg>Generated</li>
          <li class="sub more"><svg><use href="#folder"/></svg>Key_Art</li>
          <li class="sub more"><svg><use href="#folder"/></svg>PreProd_Prototypes</li>
          <li class="sub more"><svg><use href="#folder"/></svg>Test</li>
          <li class="sub more"><svg><use href="#folder"/></svg>UI</li>
          <li class="sub"><svg><use href="#pack"/></svg>CharacterVisuals</li>
        </ul>
        <div class="scrollbar light">
          <svg><use href="#chevup"/></svg>
          <div class="track"><div class="thumb"></div></div>
          <svg><use href="#chevdown"/></svg>
        </div>
      </div>
    </section>

    <section class="resources">
      <table>
        <thead>
          <tr><th class="w-name">Name</th><th class="w-type">Type</th><th class="w-guid">GUID</th><th class="w-custom">Custom 1</th><th class="w-custom">Custom 2</th><th>Source</th></tr>
        </thead>
        <tbody>
          <tr><td><svg><use href="#paw"/></svg>ORIGIN_Astarion_5614c25e-0213-479f-864c-e9589...</td><td>CharacterVisualReso...</td><td>be9fbfe1-cf9c-7864-55d3-bbd6d329150b</td><td></td><td></td><td></td></tr>
          <tr><td><svg><use href="#paw"/></svg>ORIGIN_Astarion_Hidden_Race_300b2a01-5a5b-4...</td><td>CharacterVisualReso...</td><td>4c344a90-588a-59a9-5495-3fc33893b3b0</td><td></td><td></td><td></td></tr>
          <tr><td><svg><use href="#paw"/></svg>ORIGIN_Astarion_PortraitVisual_000</td><td>CharacterVisualReso...</td><td>14c23242-b819-0d30-f5ba-5e6c9b4b6088</td><td></td><td></td><td></td></tr>
          <tr><td><svg><use href="#paw"/></svg>ORIGIN_INTRO_Astarion_ec0f5943-403f-415f-a80d...</td><td>CharacterVisualReso...</td><td>b2da9993-29a6-dc63-23dd-8b319047230c</td><td></td><td></td><td></td></tr>
          <tr><td><svg><use href="#paw"/></svg>S_LOW_CazadorsPalace_RitualRoom_Astarion_Rit...</td><td>CharacterVisualReso...</td><td>8b717bd5-cdc9-66b4-9ae0-908f9b9173a2</td><td></td><td></td><td></td></tr>
          <tr><td><svg><use href="#paw"/></svg>S_LOW_CazadorsPalace_RitualRoom_Astarion_Rit...</td><td>CharacterVisualReso...</td><td>255e4a19-65dc-27d5-bf7c-885ca92d6ea6</td><td></td><td></td><td></td></tr>
          <tr><td><svg><use href="#paw"/></svg>S_Player_Astarion_c7c13742-bacd-460a-8f65-f864f...</td><td>CharacterVisualReso...</td><td>f0c1cd99-8f94-e5ba-86b3-bfc048af906e</td><td></td><td></td><td></td></tr>
          <tr><td><svg><use href="#paw"/></svg>TEMP_Astarion_Dressed_f1fe95f7-223c-43db-8ad5-...</td><td>CharacterVisualReso...</td><td>96824355-8954-2b76-5a1d-9503b93f796b</td><td></td><td></td><td></td></tr>
          <tr><td><svg><use href="#paw"/></svg>TEMP_Astarion_Shirtless_d7254077-2adc-4729-99e...</td><td>CharacterVisualReso...</td><td>7407f64a-af3f-1f9d-ae7d-8704227c5c27</td><td></td><td></td><td></td></tr>
          <tr class="fill"><td></td><td></td><td></td><td></td><td></td><td></td></tr>
        </tbody>
      </table>
    </section>

    <aside class="options">
      <h2 class="grip">Options</h2>
      <div class="preview"></div>
      <div class="options-tools grip">
        <button aria-label="Validate"><svg class="ic-s"><use href="#vshield"/></svg></button>
        <button aria-label="Apply" class="dim"><svg class="ic-s"><use href="#check"/></svg></button>
        <button aria-label="Lock" class="dim"><svg class="ic-s"><use href="#lock"/></svg></button>
      </div>
      <div class="property-tools">
        <button aria-label="Categorized"><svg class="ic"><use href="#props"/></svg></button>
        <button aria-label="Sort"><svg class="ic"><use href="#sort"/></svg></button>
        <button aria-label="Tag" class="pressed"><svg class="ic"><use href="#tag"/></svg></button>
        <button aria-label="Reset"><svg class="ic-s"><use href="#diamond"/></svg></button>
      </div>
      <div class="properties"></div>
    </aside>
  </main>

  <section class="dock">
    <div class="dock-title">
      <h2>Root Templates</h2>
      <button aria-label="Dock menu"><svg><use href="#down"/></svg></button>
      <button aria-label="Auto hide"><svg><use href="#dockpin"/></svg></button>
      <button aria-label="Close"><svg><use href="#win-close"/></svg></button>
    </div>

    <div class="toolbar dock-toolbar">
      <button aria-label="Add"><svg class="ic-m"><use href="#plus"/></svg></button>
      <button aria-label="Remove"><svg class="ic-m"><use href="#minus"/></svg></button>
      <button aria-label="Save"><svg class="ic-s"><use href="#save"/></svg></button>
      <button aria-label="Open"><svg class="ic-m"><use href="#open"/></svg></button>
      <button aria-label="Find"><svg class="ic-m"><use href="#binoc"/></svg></button>
      <span class="bar"></span>
      <button aria-label="Layout"><svg class="ic-m"><use href="#panel"/></svg></button>
      <div class="searchbox">
        <input type="text" aria-label="Search templates">
        <button aria-label="Tag filter"><svg class="ic-s"><use href="#tag"/></svg></button>
      </div>
      <button aria-label="Clear search" class="dim"><svg class="ic-s"><use href="#cross"/></svg></button>
      <span class="bar"></span>
      <div class="kinds">
        <button aria-label="Character" class="c-pink"><svg><use href="#person"/></svg></button>
        <button aria-label="Item" class="c-wood"><svg><use href="#barrel"/></svg></button>
        <button aria-label="Scenery" class="c-green"><svg><use href="#tree"/></svg></button>
        <button aria-label="Prefab" class="c-navy"><svg><use href="#cube"/></svg></button>
        <button aria-label="Light" class="c-yellow"><svg><use href="#bulb"/></svg></button>
        <button aria-label="Gem"><svg><use href="#gem"/></svg></button>
        <button aria-label="Probe" class="c-ice"><svg><use href="#sphere"/></svg></button>
        <button aria-label="Fog" class="c-plum"><svg><use href="#ball"/></svg></button>
        <button aria-label="Portal" class="tan"><svg><use href="#park"/></svg></button>
        <button aria-label="Decal" class="c-red"><svg><use href="#decal"/></svg></button>
        <button aria-label="Spline" class="c-red"><svg><use href="#spline"/></svg></button>
        <button aria-label="Projectile" class="c-rust"><svg><use href="#tools"/></svg></button>
        <button aria-label="Surface" class="c-orange"><svg><use href="#fire"/></svg></button>
        <button aria-label="Tower" class="c-sea"><svg><use href="#tower"/></svg></button>
        <button aria-label="Tiles" class="c-brick"><svg><use href="#brick"/></svg></button>
        <button aria-label="Constellation" class="c-blue"><svg><use href="#nodes"/></svg></button>
        <button aria-label="Trigger"><svg><use href="#square"/></svg></button>
      </div>
      <span class="push count">Showing: 25357/25357</span>
    </div>

    <div class="dock-panes">
      <div class="views">
        <div class="view-tabs"><button class="active">Item view</button><button>Inheritance view</button></div>
        <div class="view-tools">
          <button aria-label="Add folder"><svg class="ic-s"><use href="#addfolder"/></svg></button>
          <button aria-label="Remove folder"><svg class="ic-s"><use href="#delfolder"/></svg></button>
        </div>
        <div class="scroll-area">
          <ul class="packages">
            <li class="all"><svg><use href="#down"/></svg>All</li>
            <li>Shared</li><li>DiceSet_01</li><li>DiceSet_02</li><li>DiceSet_03</li><li>DiceSet_06</li><li>MainUI</li>
          </ul>
          <div class="scrollbar dark">
            <svg><use href="#up"/></svg>
            <div class="track"><div class="thumb"></div></div>
            <svg><use href="#down"/></svg>
          </div>
        </div>
      </div>

      <div class="templates">
        <div class="crumbs"></div>
        <div class="scroll-area">
          <table>
            <thead><tr><th>Name</th><th class="w-id"><span>GUID</span></th></tr></thead>
            <tbody>
              <tr><td><svg><use href="#dfolder"/></svg>[Visuals] Astaria (New)</td><td></td></tr>
              <tr><td><svg><use href="#dfolder"/></svg>DiceSet_01</td><td></td></tr>
              <tr><td><svg><use href="#dfolder"/></svg>DiceSet_02</td><td></td></tr>
              <tr><td><svg><use href="#dfolder"/></svg>DiceSet_03</td><td></td></tr>
              <tr><td><svg><use href="#dfolder"/></svg>DiceSet_06</td><td></td></tr>
              <tr><td><svg><use href="#dfolder"/></svg>Gustav</td><td></td></tr>
              <tr><td><svg><use href="#dfolder"/></svg>GustavDev</td><td></td></tr>
              <tr><td><svg><use href="#dfolder"/></svg>MainUI</td><td></td></tr>
            </tbody>
          </table>
          <div class="scrollbar dark short">
            <svg><use href="#up"/></svg>
            <div class="track"><div class="thumb"></div></div>
            <svg><use href="#down"/></svg>
          </div>
        </div>
      </div>
    </div>
  </section>

  <footer class="statusbar">
    <div class="memory"><div class="memory-fill"></div><span>68.8% - 7691MB</span></div>
    <div class="coords camera">
      <span>Cam.</span>
      <label for="cam-x">X</label><input id="cam-x" value="10.469">
      <label for="cam-y">Y</label><input id="cam-y" value="12.574">
      <label for="cam-z">Z</label><input id="cam-z" value="-3.308">
    </div>
    <div class="status-buttons">
      <button aria-label="Link bookmark"><svg><use href="#mark"/></svg></button>
      <button aria-label="Add bookmark"><svg><use href="#markplus"/></svg></button>
      <button aria-label="Offline"><svg><use href="#globe"/></svg></button>
    </div>
    <span class="push selected-count">Selected Objects (0)</span>
    <div class="status-buttons">
      <button aria-label="Local space"><svg><use href="#gshield"/></svg></button>
      <button aria-label="Global space"><svg><use href="#gring"/></svg></button>
      <button aria-label="Reset pivot"><svg><use href="#target"/></svg></button>
    </div>
    <div class="coords">
      <span>Pos.</span>
      <label for="pos-x" class="x">X</label><input id="pos-x" value="0">
      <label for="pos-y" class="y">Y</label><input id="pos-y" value="0">
      <label for="pos-z" class="z">Z</label><input id="pos-z" value="0">
    </div>
    <div class="coords">
      <span>Rot.</span>
      <label for="rot-x" class="x">X</label><input id="rot-x" value="0">
      <label for="rot-y" class="y">Y</label><input id="rot-y" value="0">
      <label for="rot-z" class="z">Z</label><input id="rot-z" value="0">
    </div>
    <div class="coords scale">
      <span>Scale</span>
      <label for="scale" class="x">XYZ</label><input id="scale" value="0">
    </div>
  </footer>

  <div class="watermark">
    <p class="big">Activate Windows</p>
    <p>Go to Settings to activate Windows.</p>
  </div>
</body>
</html>
```
FILE: styles.css
```css
* { box-sizing: border-box; }
body {
  margin: 0;
  height: 100vh;
  display: flex;
  flex-direction: column;
  overflow: hidden;
  background: #4b4b4b;
  color: #f0f0f0;
  font-family: Lato, "Open Sans", sans-serif;
  font-size: 8px;
  line-height: 10px;
}
h1, h2, p, ul { margin: 0; padding: 0; font-size: inherit; font-weight: normal; }
ul { list-style: none; }
button, input { font: inherit; color: inherit; margin: 0; padding: 0; border: 0; background: none; }
button { display: flex; align-items: center; justify-content: center; white-space: nowrap; }
input { min-width: 0; outline: none; }
svg { display: block; width: 10px; height: 10px; flex: none; }
.sprite { display: none; }
.ic { width: 14px; height: 14px; }
.ic-wide { width: 18px; height: 14px; }
.ic-m { width: 12px; height: 12px; }
.ic-s { width: 10px; height: 10px; }
.ic-xs { width: 8px; height: 8px; }
.caret { width: 4px; height: 4px; }
.push { margin-left: auto; }

/* icon colours */
.dim { color: #a5a5a5; }
.off { color: #7c7c7c; }
.purple { color: #8d78b5; }
.olive { color: #b9c26c; }
.tan { color: #cc9049; }
.teal { color: #4c8791; }
.hi-purple { --hi: #8d78b5; }
.hi-olive { --hi: #b9c26c; }
.hi-tan { --hi: #cc9049; }
.hi-light { --hi: #b5b5b5; }
.c-orange { color: #f0831e; }
.c-rust { color: #dc4f27; }
.c-red { color: #cf2f33; }
.c-green { color: #55a63b; }
.c-violet { color: #9540b5; }
.c-aqua { color: #3dc3b5; }
.c-sky { color: #2faae4; }
.c-lime { color: #9bc22c; }
.c-yellow { color: #f3dc2a; }
.c-pink { color: #d6246f; }
.c-blue { color: #3f78ba; }
.c-dkgreen { color: #23683c; }
.c-brick { color: #c14329; }
.c-hot { color: #f2407e; }
.c-pill { color: #e0646a; }
.c-mint { color: #55b89a; }
.c-wood { color: #b96b2c; }
.c-navy { color: #2b6a8c; }
.c-ice { color: #7fb4bd; }
.c-plum { color: #7a2d86; }
.c-sea { color: #2fa08d; }
.c-light { color: #ccc; }

.titlebar {
  height: 15px;
  display: flex;
  align-items: center;
  gap: 4px;
  padding: 0 13px 0 2px;
  background: #fff;
  color: #111;
}
.titlebar .ic { width: 10px; height: 10px; }
.window-buttons { margin-left: auto; display: flex; gap: 22px; }
.window-buttons svg { width: 8px; height: 8px; }

.menubar { height: 22px; display: flex; padding-left: 1px; border-top: 1px solid #333; }
.menubar button { padding: 0 6px; }

.toolbar { display: flex; align-items: center; }
.main-toolbar { height: 22px; color: #cfcfcf; }
.main-toolbar button { width: 20px; height: 20px; flex: none; }
.main-toolbar .sep { width: 4px; height: 17px; border-left: 1px solid #646464; }
.main-toolbar .sep.wide { width: 7px; }
.main-toolbar .push { margin-right: 1px; }
.main-toolbar .ai { color: #6fa37c; font-size: 13px; font-weight: bold; }

.tabstrip {
  height: 14px;
  display: flex;
  padding: 1px 3px 0 1px;
  background: linear-gradient(#6a6a6a, #333);
  border-bottom: 1px solid #777;
}
.tabstrip button { padding: 0 2px; color: #8b8b8b; background: #474747; border: 1px solid #5c5c5c; border-bottom: 0; }
.tabstrip button.active { color: #fff; border-color: #999; }
.tabstrip .push { background: none; border: 0; padding: 0; color: #ccc; }

.resource-toolbar { height: 17px; padding: 0 2px 0 1px; color: #c4c4c4; }
.resource-toolbar > button { width: 15px; height: 14px; }
.resource-toolbar .framed { border: 1px solid #ccc; background: #333; }
.resource-toolbar label { color: #fff; width: 31px; padding-left: 4px; margin-left: 2px; border-left: 1px solid #777; }
.resource-toolbar > input { width: 98px; height: 15px; background: #fff; color: #111; margin-right: 2px; }
.type-filters { display: flex; margin-left: 4px; border: 1px solid #ddd; }
.type-filters button { width: 15px; height: 13px; background: #333; border-left: 1px solid #ddd; }
.type-filters button:first-child { border-left: 0; }
.type-filters button:nth-child(3n) { width: 16px; }
.type-filters svg { width: 10px; height: 10px; }
.showing { margin-left: auto; }
.resource-toolbar > .settings { width: 18px; gap: 4px; margin-left: 4px; }

.workspace { flex: 1; min-height: 0; display: flex; gap: 3px; padding-left: 2px; border-bottom: 1px solid #999; }
.browser { width: 238px; display: flex; flex-direction: column; padding-bottom: 1px; }
.browser-tools { position: relative; height: 16px; display: flex; align-items: center; gap: 3px; color: #c9c9c9; }
.browser-tools button { width: 12px; height: 12px; background: #1c1c1c; }
.tooltip {
  position: absolute;
  top: 15px;
  left: 8px;
  z-index: 2;
  padding: 0 3px;
  color: #575757;
  background: #fff;
  border: 1px solid #999;
  box-shadow: 2px 2px 1px rgba(0,0,0,0.4);
}
.tree-box { flex: 1; min-height: 0; display: flex; background: #fff; border: 1px solid #777; }
.tree { flex: 1; padding: 1px 0 0 2px; overflow: hidden; color: #111; font-family: "Liberation Sans", sans-serif; font-size: 7px; }
.tree li { height: 11px; display: flex; align-items: center; gap: 3px; white-space: nowrap; }
.tree li:nth-child(3n) { height: 10px; }
.tree svg { width: 11px; height: 10px; }
.tree .selected span { color: #fff; background: #0078d7; height: 11px; padding: 0 1px; margin-left: -1px; }
/* connector lines and expander box */
.sub::before {
  content: "";
  width: 7px;
  height: 11px;
  margin: 0 -3px 0 5px;
  border-left: 1px solid #bbb;
  background: linear-gradient(#bbb, #bbb) 0 5px / 7px 1px no-repeat;
}
.sub.last::before { height: 6px; align-self: flex-start; }
.sub.more { position: relative; }
.sub.more::after {
  content: "+";
  position: absolute;
  left: 3px;
  top: 3px;
  width: 5px;
  height: 5px;
  outline: 1px solid #aaa;
  background: #fff;
  color: #234a9c;
  line-height: 5px;
  text-align: center;
}
.scrollbar { display: flex; flex-direction: column; align-items: center; }
.scrollbar .track { flex: 1; width: 100%; }
.light { width: 11px; background: #f0f0f0; color: #444; padding: 3px 0; gap: 3px; }
.light svg { width: 6px; height: 6px; }
.light .thumb { height: 79%; background: #cdcdcd; }
.dark { width: 12px; background: #3f3f3f; color: #888; padding: 3px 0; gap: 2px; }
.dark svg { width: 6px; height: 6px; }
.dark .thumb { width: 5px; height: 48px; margin: 0 auto; border-radius: 3px; background: #858585; }
.dark.short .thumb { height: 5px; }

.resources { flex: 1; min-width: 0; overflow: hidden; background: #fff; color: #111; border-top: 1px solid #999; font-family: "Liberation Sans", sans-serif; font-size: 7px; }
.resources table { width: 100%; height: 100%; table-layout: fixed; border-collapse: separate; border-spacing: 0; }
.resources th { height: 17px; padding: 0 4px 2px; text-align: left; font-weight: normal; border-right: 1px solid #e5e5e5; }
.resources td {
  height: 11px;
  padding: 0 3px;
  line-height: 10px;
  white-space: nowrap;
  overflow: hidden;
  border-right: 1px solid #eee;
  border-bottom: 1px solid #eee;
}
.resources tr:nth-child(3n) td { height: 12px; }
.resources td:first-child { padding-left: 11px; }
.resources svg { display: inline-block; width: 10px; height: 9px; margin-right: 4px; vertical-align: middle; }
/* empty rows below the data repeat the row lines */
.resources .fill td {
  height: auto;
  background: repeating-linear-gradient(#fff 0 10px, #eee 10px 11px, #fff 11px 21px, #eee 21px 22px, #fff 22px 33px, #eee 33px 34px);
}
.w-name { width: 200px; }
.w-type { width: 80px; }
.w-guid { width: 154px; }
.w-custom { width: 57px; }

.options { width: 90px; display: flex; flex-direction: column; padding: 0 2px 1px 0; }
.options h2 { height: 17px; line-height: 17px; padding-left: 12px; }
.grip { background: repeating-linear-gradient(#ddd 0 2px, transparent 2px 3px) 2px 4px / 2px 9px no-repeat; }
.preview { flex: 181; background: #5f6675; }
.options-tools { height: 20px; display: flex; align-items: center; gap: 6px; padding-left: 8px; }
.property-tools { height: 24px; display: flex; align-items: center; gap: 4px; padding-left: 9px; margin-bottom: 5px; }
.property-tools .pressed { width: 21px; height: 16px; background: #333; border: 1px solid #5c5c5c; margin: 0 2px 0 3px; }
.property-tools .pressed svg { width: 12px; height: 12px; }
.properties { flex: 146; margin: 0 0 0 2px; background: #333; border: 1px solid #3c3c3c; }

.dock { padding-top: 5px; }
.dock-title {
  height: 13px;
  display: flex;
  align-items: center;
  gap: 6px;
  padding: 0 4px;
  background: linear-gradient(#6a6a6a, #343434);
}
.dock-title h2 { flex: 1; }
.dock-title svg { width: 7px; height: 7px; }
.dock-toolbar { height: 26px; padding: 0 9px 0 4px; color: #cfcfcf; }
.dock-toolbar > button { width: 18px; height: 16px; }
.bar { width: 1px; height: 14px; background: #ccc; margin: 0 6px; }
.searchbox { width: 322px; height: 12px; display: flex; margin-left: 5px; background: #333; }
.searchbox input { flex: 1; }
.searchbox button { width: 14px; }
.kinds { display: flex; }
.kinds button { width: 14px; height: 14px; }

.dock-panes { display: flex; gap: 2px; padding: 0 2px 3px 3px; }
.views { width: 382px; }
.view-tabs { height: 14px; display: flex; background: #333; border: 1px solid #2a2a2a; }
.view-tabs button { padding: 0 4px; }
.view-tabs .active { background: #4a6b48; }
.view-tools { height: 14px; display: flex; align-items: center; gap: 4px; padding-left: 7px; color: #858585; }
.scroll-area { display: flex; overflow: hidden; }
.views .scroll-area { height: 109px; background: #333; }
.packages { flex: 1; color: #d5d5d5; }
.packages li { height: 17px; display: flex; align-items: center; }
.packages li:nth-child(3n+1) { height: 16px; }
.packages li::before {
  content: "▪";
  width: 22px;
  height: 100%;
  margin-left: 9px;
  line-height: 16px;
  text-align: center;
  border-left: 1px solid #5c5c5c;
  background: linear-gradient(#5c5c5c, #5c5c5c) 0 8px / 6px 1px no-repeat;
}
.packages .all { padding-left: 6px; gap: 7px; background: #4a505b; }
.packages .all::before { display: none; }
.packages svg { width: 7px; height: 7px; }

.templates { flex: 1; min-width: 0; display: flex; flex-direction: column; }
.crumbs { height: 14px; border: 1px solid #272727; }
.templates .scroll-area { height: 123px; }
.templates table { flex: 1; table-layout: fixed; border-spacing: 0; color: #ddd; }
.templates th { height: 16px; padding: 0 7px 2px; text-align: left; font-weight: normal; background: #4b4b4b; border-bottom: 1px solid #333; }
.templates th span { display: block; padding-left: 6px; border-left: 1px solid #ddd; }
.templates .w-id { width: 267px; padding-left: 0; }
.templates td { height: 13px; padding: 0 7px; background: #373737; }
.templates tr:nth-child(3n) td { height: 14px; }
.templates tr:nth-child(odd) td { background: #333; }
.templates tbody svg { display: inline-block; width: 9px; height: 9px; margin-right: 4px; vertical-align: middle; }

.statusbar {
  height: 23px;
  display: flex;
  align-items: center;
  padding: 0 8px 0 5px;
  background: #3a3a3a;
}
.memory { position: relative; width: 107px; height: 14px; border-radius: 3px; background: #262626; overflow: hidden; text-align: center; line-height: 14px; margin-right: 8px; }
.memory-fill { position: absolute; inset: 0 auto 0 0; width: 69%; background: #626262; }
.memory span { position: relative; font-size: 6px; font-weight: bold; }
.coords { height: 18px; display: flex; align-items: center; background: #484848; border: 1px solid #484848; border-radius: 2px; margin-left: 14px; }
.coords span { width: 21px; text-align: center; }
.coords label { width: 10px; height: 16px; line-height: 16px; text-align: center; }
.coords input { width: 42px; height: 16px; padding-left: 5px; background: #343434; }
.camera { margin-left: 0; }
.camera span { width: 25px; }
.camera label { background: #505050; }
.camera input { width: 39px; margin-right: 2px; background: #212121; }
.x { background: #983538; border-radius: 2px; }
.y { background: #3c9138; border-radius: 2px; }
.z { background: #38569a; border-radius: 2px; }
.coords.scale span { width: 25px; }
.coords.scale label { width: 20px; }
.coords.scale input { width: 29px; }
.status-buttons { display: flex; gap: 5px; margin-left: 6px; color: #b8b8b8; }
.status-buttons button { width: 18px; height: 18px; background: #525252; border-radius: 2px; }
.status-buttons svg { width: 13px; height: 13px; }

.watermark { position: absolute; left: 1066px; bottom: 33px; color: #858585; font-size: 10px; line-height: 12px; pointer-events: none; }
.watermark .big { font-size: 14px; line-height: 18px; }
```
